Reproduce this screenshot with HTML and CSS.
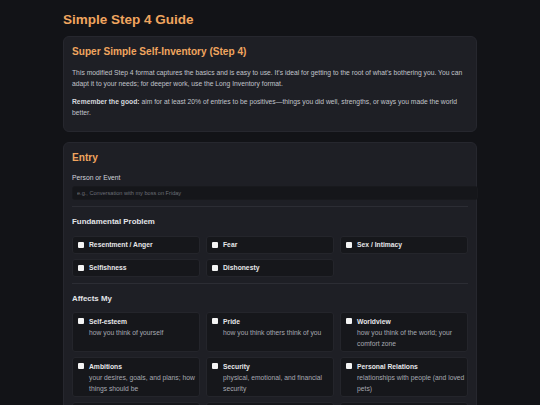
FILE: index.html
```html
<!DOCTYPE html>
<html lang="en">
<head>
<meta charset="utf-8">
<title>Simple Step 4 Guide</title>
<link rel="stylesheet" href="styles.css">
</head>
<body>
<main class="wrap">
  <h1 class="title">Simple Step 4 Guide</h1>

  <section class="card intro">
    <h2 class="card-title">Super Simple Self-Inventory (Step 4)</h2>
    <p class="text">This modified Step 4 format captures the basics and is easy to use. It's ideal for getting to the root of what's bothering you. You can adapt it to your needs; for deeper work, use the Long Inventory format.</p>
    <p class="text"><strong>Remember the good:</strong> aim for at least 20% of entries to be positives—things you did well, strengths, or ways you made the world better.</p>
  </section>

  <section class="card entry">
    <h2 class="card-title">Entry</h2>
    <label class="field-label" for="who">Person or Event</label>
    <input class="field" id="who" type="text" placeholder="e.g., Conversation with my boss on Friday">

    <div class="section">
      <h3 class="section-title">Fundamental Problem</h3>
      <div class="grid">
        <label class="opt"><input type="checkbox" class="box"><span class="opt-body"><span class="opt-name">Resentment / Anger</span></span></label>
        <label class="opt"><input type="checkbox" class="box"><span class="opt-body"><span class="opt-name">Fear</span></span></label>
        <label class="opt"><input type="checkbox" class="box"><span class="opt-body"><span class="opt-name">Sex / Intimacy</span></span></label>
        <label class="opt"><input type="checkbox" class="box"><span class="opt-body"><span class="opt-name">Selfishness</span></span></label>
        <label class="opt"><input type="checkbox" class="box"><span class="opt-body"><span class="opt-name">Dishonesty</span></span></label>
      </div>
    </div>

    <div class="section">
      <h3 class="section-title">Affects My</h3>
      <div class="grid">
        <label class="opt"><input type="checkbox" class="box"><span class="opt-body"><span class="opt-name">Self-esteem</span><span class="opt-desc">how you think of yourself</span></span></label>
        <label class="opt"><input type="checkbox" class="box"><span class="opt-body"><span class="opt-name">Pride</span><span class="opt-desc">how you think others think of you</span></span></label>
        <label class="opt"><input type="checkbox" class="box"><span class="opt-body"><span class="opt-name">Worldview</span><span class="opt-desc">how you think of the world; your comfort zone</span></span></label>
        <label class="opt"><input type="checkbox" class="box"><span class="opt-body"><span class="opt-name">Ambitions</span><span class="opt-desc">your desires, goals, and plans; how things should be</span></span></label>
        <label class="opt"><input type="checkbox" class="box"><span class="opt-body"><span class="opt-name">Security</span><span class="opt-desc">physical, emotional, and financial security</span></span></label>
        <label class="opt"><input type="checkbox" class="box"><span class="opt-body"><span class="opt-name">Personal Relations</span><span class="opt-desc">relationships with people (and loved pets)</span></span></label>
        <label class="opt"><input type="checkbox" class="box"><span class="opt-body"><span class="opt-name">Sex Relations</span><span class="opt-desc">intimate and sexual relationships</span></span></label>
        <label class="opt"><input type="checkbox" class="box"><span class="opt-body"><span class="opt-name">Finances</span><span class="opt-desc">money, work, and material things</span></span></label>
        <label class="opt"><input type="checkbox" class="box"><span class="opt-body"><span class="opt-name">Emotions</span><span class="opt-desc">how you feel and react</span></span></label>
      </div>
    </div>
  </section>
</main>
</body>
</html>
```

FILE: styles.css
```css
* { box-sizing: border-box; }

html, body {
  margin: 0;
  background: #121317;
}

body {
  font-family: "Liberation Sans", Arial, sans-serif;
  font-size: 6.75px;
  line-height: 11px;
  color: #c4c7ce;
  padding: 12px 0 20px;
}

.wrap {
  width: 414px;
  margin: 0 auto;
}

.title {
  margin: 0 0 8px;
  font-size: 13.5px;
  line-height: 16px;
  font-weight: 700;
  color: #f0a55f;
}

.card {
  background: #1e1f25;
  border: 1px solid #26272e;
  border-radius: 6px;
  padding: 9px 8px 8px;
  margin-bottom: 10px;
}

.card-title {
  margin: 0 0 9px;
  font-size: 10.1px;
  line-height: 12px;
  font-weight: 700;
  color: #f0a55f;
}

.entry .card-title {
  margin-bottom: 8px;
}

.text {
  margin: 0 0 7px;
  color: #c0c3ca;
}

.text:last-child {
  margin-bottom: 5px;
}

.text strong {
  color: #d6d8de;
}

.field-label {
  display: block;
  color: #d2d4da;
  margin-bottom: 3px;
}

.field {
  display: block;
  box-sizing: content-box;
  width: 100%;
  height: 12px;
  padding: 0 4px;
  margin: 0;
  border: 1px solid #18191d;
  border-radius: 3px;
  background: #15161a;
  color: #ddd;
  font-family: inherit;
  font-size: 5.6px;
  outline: none;
}

.field::placeholder {
  color: #6c6f77;
}

.section {
  border-top: 1px solid #2c2d34;
  margin-top: 6px;
  padding-top: 9px;
}

.section-title {
  margin: 0 0 8.5px;
  font-size: 7.9px;
  line-height: 11px;
  font-weight: 700;
  color: #e2e4e8;
}

.grid {
  display: grid;
  grid-template-columns: repeat(3, 1fr);
  gap: 5px 6px;
}

.opt {
  display: flex;
  align-items: flex-start;
  gap: 5px;
  background: #16171b;
  border: 1px solid #24252b;
  border-radius: 3px;
  padding: 2.5px 2px 2.5px 5px;
}

.box {
  appearance: none;
  -webkit-appearance: none;
  flex: none;
  width: 6px;
  height: 6px;
  margin: 2.5px 0 0;
  background: #f4f4f4;
  border-radius: 1px;
  border: 0;
}

.opt-body {
  display: flex;
  flex-direction: column;
}

.opt-name {
  font-weight: 700;
  color: #e6e7ea;
}

.opt-desc {
  color: #a6a9b1;
}
```
